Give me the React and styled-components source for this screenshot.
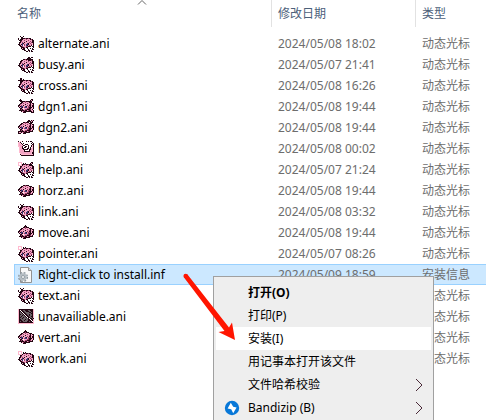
import React from "react";
import styled, { createGlobalStyle, css } from "styled-components";

const GlobalStyle = createGlobalStyle`
  html, body { margin: 0; background: #fff; }
  body {
    font: 12px/20px "Noto Sans", "Noto Sans CJK SC", sans-serif;
    overflow: hidden;
  }
`;

const Explorer = styled.main`
  position: relative;
  height: 100vh;
  overflow: hidden;
`;

const FileTable = styled.table`
  width: 100%;
  border-collapse: separate;
  border-spacing: 0;
  table-layout: fixed;
`;

const Column = styled.col`
  width: ${(p) => p.$width};
`;

const HeadCell = styled.th`
  height: 27px;
  padding: 0 0 0 ${(p) => (p.$first ? "17px" : "6px")};
  text-align: left;
  font-weight: 400;
  color: #4c607a;
  ${(p) => !p.$first && css`border-left: 1px solid #e2e2e2;`}
`;

const SortMark = styled.svg`
  position: absolute;
  left: 137px;
  top: 0;
`;

const Spacer = styled.tr`
  height: 6px;
`;

const Cell = styled.td`
  height: 21px;
  box-sizing: border-box;
  padding: 0 0 0 ${(p) => (p.$first ? "18px" : "7px")};
  color: ${(p) => (p.$first ? "#000" : "#6d6d6d")};
  white-space: nowrap;
  ${(p) =>
    p.$selected &&
    !p.$first &&
    css`
      background: #cce8ff;
      box-shadow: inset 0 1px #99d1ff, inset 0 -1px #99d1ff;
    `}
  ${(p) =>
    p.$selected &&
    p.$first &&
    css`
      background:
        linear-gradient(#99d1ff, #99d1ff) 14px 0 / 1px 100% no-repeat,
        linear-gradient(#99d1ff, #99d1ff) 14px 0 / 100% 1px no-repeat,
        linear-gradient(#99d1ff, #99d1ff) 14px 100% / 100% 1px no-repeat,
        linear-gradient(#cce8ff, #cce8ff) 14px 0 / 100% 100% no-repeat;
    `}
`;

const FileName = styled.span`
  display: flex;
  align-items: center;
  gap: 4px;
  height: 21px;
`;

const Icon = styled.svg`
  flex: none;
  display: block;
`;

const Menu = styled.div`
  position: absolute;
  left: 213px;
  top: 276px;
  width: 221px;
  box-sizing: border-box;
  padding: 4px 2px;
  border: 1px solid #a0a0a0;
  background: #eee;
`;

const MenuItem = styled.button`
  display: grid;
  grid-template-columns: 32px 1fr 16px;
  align-items: center;
  width: 100%;
  height: 23px;
  padding: 0;
  border: 0;
  background: ${(p) => (p.$active ? "#fff" : "transparent")};
  color: #000;
  font: inherit;
  font-weight: ${(p) => (p.$bold ? 700 : 400)};
  text-align: left;
`;

const IconSlot = styled.span`
  padding-left: 8px;
`;

const Pointer = styled.svg`
  position: absolute;
  left: 180px;
  top: 270px;
  pointer-events: none;
`;

const PALETTE = {
  k: "#240512",
  p: "#f3a5c4",
  d: "#9c3f69",
  b: "#3c3978",
  w: "#ffffff",
  g: "#686065",
  l: "#ffb9cf",
};

const BODY = [
  "................",
  "................",
  ".....kkdkkdkk...",
  "...kkpppdpppkdk.",
  "..kkppdpppdpppkk",
  "..kdppppkpppdpkk",
  ".kkpdpkppppdpdkk",
  ".kppbkpppbkpdppk",
  "kkpkbpdpbbkppdpk",
  ".kkpbwdpbkpdpkwk",
  "..kkdpppddkkkwkk",
  "...kkkdpkkwwwwwk",
  "...kpkkwwkwwkwk.",
  "....kkkwwwkwwwkk",
  "......kkwwkkwk..",
  "........kk.k.kk.",
];

const FLOATING = [
  "................",
  "................",
  ".....kkdkkk.....",
  "...kkppdpppkkk..",
  "..kkpdpppdppkpkk",
  ".kdppppkpppdkppk",
  "kkpdpkpppdpkkpkk",
  "kpkbbppbkpddkpkk",
  ".kpbkpdbbpdkkkpk",
  "..kkpwpppddkkppk",
  "..kdkppddkkkdpk.",
  ".kkkkkdkkpdkkkk.",
  "...kpdkkkkkk....",
  ".....kkk........",
  "................",
  "................",
];

const HAND = [
  "k.l.k...k.k.kk..",
  "llk...........k.",
  "lplk.k.......k.k",
  "lpplk..kkk....kk",
  "lppplkkwwwk..klk",
  "llppkwwkkwk..klk",
  ".lppkwkkwwk.kwlk",
  ".lppkkwwwkk.kplk",
  ".lpppkkkkk.kkplk",
  ".lppppk....kpplk",
  ".lppppkkkkkkpplk",
  ".lppppppppppplkk",
  "..lpppppppppplkk",
  "..kllllllllllllk",
  "...kkkkkkkkkkkkk",
  "................",
];

const BLOCKED = [
  "lkkkkkkkkkkkkkkl",
  "lkwkkggkkkggkkkl",
  "lkkwkkggkkkggkkl",
  "lkgkwkkggggkkgkl",
  "lkggkwkkgggggkkl",
  "lkkggkwkkggkggkl",
  "lkggkgkwkkgkggkl",
  "lkgkgggkwkkggkkl",
  "lkkggkggkwkkggkl",
  "lkggkgggggkwkkgkl".slice(0, 16),
  "lkkggggkggkkwkkl",
  "lkkkggkgggkkkwkl",
  "lkgkkggggkkgkkwl",
  "lkkkkkkkkkkkkkkl",
  "llllllllllllllll",
  "................",
];

const overlay = (base, marks) =>
  base.map((row, y) => {
    const mark = marks[y] || "";
    return [...row].map((c, x) => (mark[x] && mark[x] !== "." ? mark[x] : c)).join("");
  });

const ANTENNA = ["..k..k..........", "...kk...........", "k..kk...........", "k.k.............", ".kk............."];
const LEAF = ["..........kk.kk.", ".........kkkk...", "........kkkkkkk.", "..........kkk..."];
const CROSS = ["..kk............", "..kk.k..........", "kkkkkk..........", "..kk............", "..k............."];
const BUBBLE = ["llll............", "lwwl.k.k........", "lwwl............", "llll............"];
const EARS = ["..k..........kk.", ".kkk........kpk.", "..kkk......kkk..", "...kk......kkk.."];
const TAIL = ["..........kk.kpk", ".........kkkkpk.", "..........k.kkk."];
const TOP = [".......k........", "......kkk.......", ".....kkdkkk....."];
const FOOT = [...Array(11).fill(""), "............kppk", "............kkpk", ".............kkk"];
const BACK_FOOT = [...Array(11).fill(""), "kkkkk...........", "kppk............", "kkk............."];

const SPRITES = {
  alternate: overlay(BODY, ANTENNA),
  busy: overlay(BODY, LEAF),
  cross: overlay(BODY, CROSS),
  dgn1: overlay(overlay(FLOATING, EARS), FOOT),
  dgn2: overlay(overlay(FLOATING, TAIL), BACK_FOOT),
  hand: HAND,
  help: overlay(overlay(BODY, EARS), BUBBLE),
  horz: FLOATING,
  link: overlay(BODY, ANTENNA),
  move: overlay(FLOATING, TOP),
  pointer: overlay(BODY, BUBBLE),
  text: overlay(BODY, ANTENNA),
  blocked: BLOCKED,
  vert: overlay(FLOATING, TOP),
  work: overlay(BODY, BUBBLE),
};

function CursorIcon({ name }) {
  const paths = {};
  SPRITES[name].forEach((row, y) =>
    [...row].forEach((c, x) => {
      if (c !== ".") paths[c] = (paths[c] || "") + `M${x} ${y}h1v1h-1z`;
    })
  );
  return (
    <Icon width="16" height="16" shapeRendering="crispEdges" aria-hidden="true">
      {Object.entries(paths).map(([c, d]) => (
        <path key={c} d={d} fill={PALETTE[c]} />
      ))}
    </Icon>
  );
}

function InfIcon() {
  return (
    <Icon width="16" height="16" aria-hidden="true">
      <path d="M2.5.5h8l3 3v12h-11z" fill="#f8f8f8" stroke="#929292" />
      <path d="M10.5.5v3h3" fill="#ddd" stroke="#929292" />
      <circle cx="5" cy="10" r="4.300" fill="none" stroke="#8c979e" strokeWidth="1.500" strokeDasharray="1.900 1.500" />
      <circle cx="5" cy="10" r="2.700" fill="#e4e9ec" stroke="#b5bdc3" strokeWidth="2" />
      <circle cx="5" cy="10" r="1.500" fill="#fff" stroke="#7d8990" strokeWidth=".8" />
    </Icon>
  );
}

function BandizipIcon() {
  return (
    <Icon width="16" height="16" viewBox="0 0 16 16" aria-hidden="true">
      <circle cx="8" cy="8" r="7.200" fill="#0878d8" />
      <path d="M6.800 2.800 9.200 6.800 12.600 7.600 9.200 13.200 7.200 9.200 3.600 8.400z" fill="#fff" />
    </Icon>
  );
}

function SubmenuArrow() {
  return (
    <Icon width="10" height="14" aria-hidden="true">
      <path d="m1 1 6 6-6 6" fill="none" stroke="#4a2a38" />
    </Icon>
  );
}

const CURSOR = "动态光标";
const FILES = [
  ["alternate", "alternate.ani", "2024/05/08 18:02"],
  ["busy", "busy.ani", "2024/05/07 21:41"],
  ["cross", "cross.ani", "2024/05/08 16:26"],
  ["dgn1", "dgn1.ani", "2024/05/08 19:44"],
  ["dgn2", "dgn2.ani", "2024/05/08 19:44"],
  ["hand", "hand.ani", "2024/05/08 00:02"],
  ["help", "help.ani", "2024/05/07 21:24"],
  ["horz", "horz.ani", "2024/05/08 19:44"],
  ["link", "link.ani", "2024/05/08 03:32"],
  ["move", "move.ani", "2024/05/08 19:44"],
  ["pointer", "pointer.ani", "2024/05/07 08:26"],
  ["inf", "Right-click to install.inf", "2024/05/09 18:59", "安装信息"],
  ["text", "text.ani", ""],
  ["blocked", "unavailiable.ani", ""],
  ["vert", "vert.ani", ""],
  ["work", "work.ani", ""],
];

const ACTIONS = [
  { label: "打开(O)", bold: true },
  { label: "打印(P)" },
  { label: "安装(I)", active: true },
  { label: "用记事本打开该文件" },
  { label: "文件哈希校验", submenu: true },
  { label: "Bandizip (B)", submenu: true, icon: <BandizipIcon /> },
];

export default function App() {
  return (
    <Explorer>
      <GlobalStyle />
      <FileTable>
        <colgroup>
          <Column $width="271px" />
          <Column $width="144px" />
          <Column $width="auto" />
        </colgroup>
        <thead>
          <tr>
            <HeadCell $first>名称</HeadCell>
            <HeadCell>修改日期</HeadCell>
            <HeadCell>类型</HeadCell>
          </tr>
        </thead>
        <tbody>
          <Spacer />
          {FILES.map(([icon, name, date, type = CURSOR]) => {
            const selected = icon === "inf";
            return (
              <tr key={name} aria-selected={selected}>
                <Cell $first $selected={selected}>
                  <FileName>
                    {selected ? <InfIcon /> : <CursorIcon name={icon} />}
                    {name}
                  </FileName>
                </Cell>
                <Cell $selected={selected}>{date}</Cell>
                <Cell $selected={selected}>{type}</Cell>
              </tr>
            );
          })}
        </tbody>
      </FileTable>
      <SortMark width="10" height="6" aria-hidden="true">
        <path d="m1 4.500 4-4 4 4" fill="none" stroke="#666" />
      </SortMark>
      <Menu role="menu">
        {ACTIONS.map(({ label, bold, active, submenu, icon }) => (
          <MenuItem key={label} type="button" role="menuitem" $bold={bold} $active={active}>
            <IconSlot>{icon}</IconSlot>
            <span>{label}</span>
            {submenu && <SubmenuArrow />}
          </MenuItem>
        ))}
      </Menu>
      <Pointer width="60" height="75" aria-hidden="true">
        <path d="M4 7.500 7.500 4.500 49 57.500 52 52.500 55 70 38.500 62 44.500 61z" fill="#ff1500" />
        <circle cx="5.700" cy="6" r="2.300" fill="#ff1500" />
      </Pointer>
    </Explorer>
  );
}
